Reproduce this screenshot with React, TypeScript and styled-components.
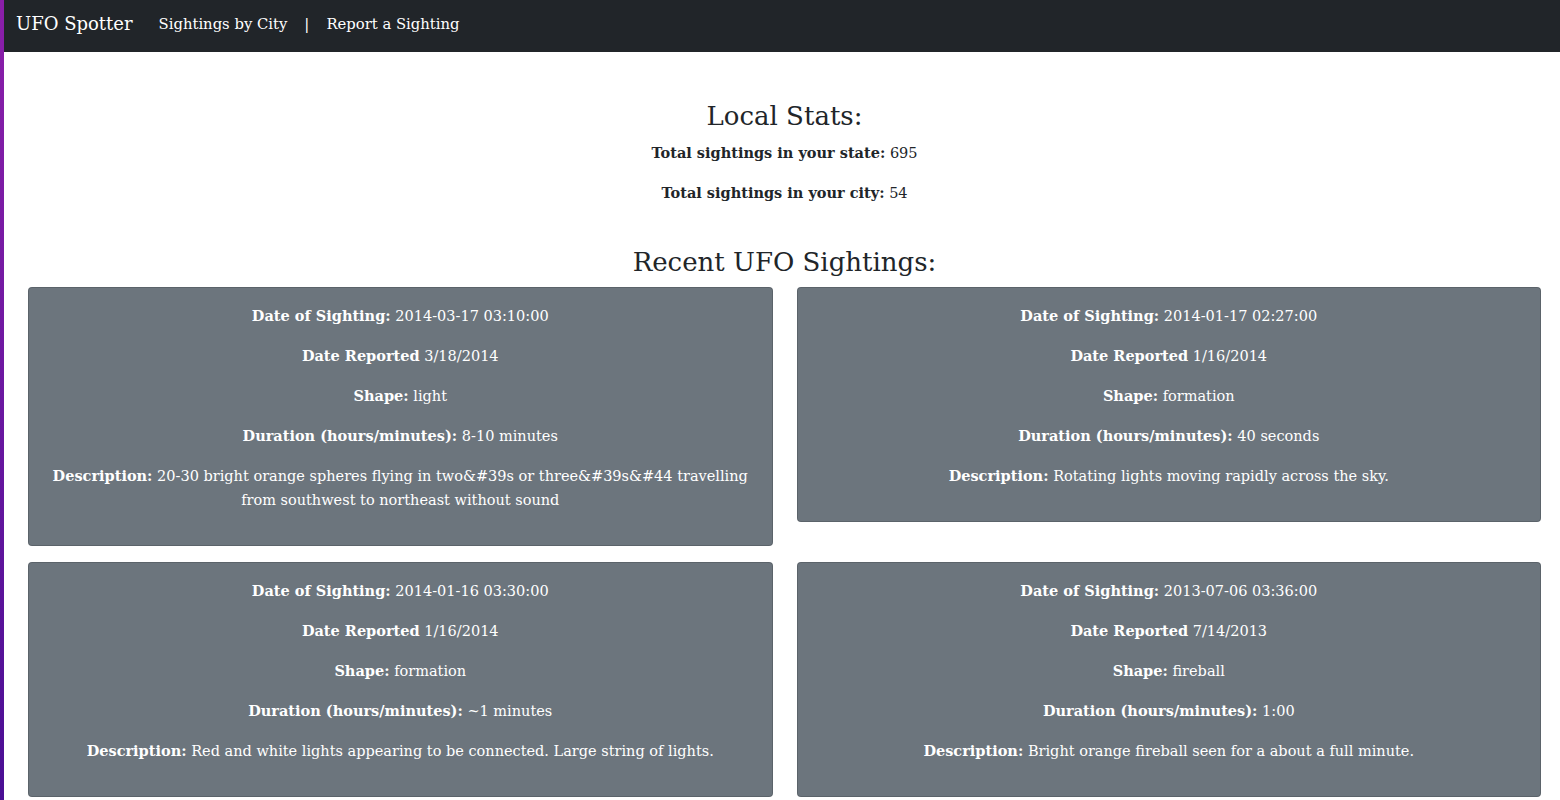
import { FC } from "react";
import styled, { createGlobalStyle } from "styled-components";

const GlobalStyle = createGlobalStyle`
  body {
    margin: 0;
    font-family: "DejaVu Serif", "Liberation Serif", serif;
    color: #212529;
    background: #ffffff;
  }
`;

const Page = styled.div`
  display: flex;
  min-height: 800px;
`;

const Strip = styled.div`
  width: 4px;
  flex-shrink: 0;
  background: linear-gradient(180deg, #8b1fa9 0%, #6a17a0 50%, #480e93 100%);
`;

const Main = styled.div`
  flex: 1;
  min-width: 0;
`;

const Navbar = styled.nav`
  display: flex;
  align-items: center;
  height: 52px;
  box-sizing: border-box;
  padding: 0 12px 5px;
  background: #212529;
  color: #ffffff;
`;

const Brand = styled.a`
  font-size: 18px;
  color: #ffffff;
  margin-right: 26px;
  white-space: nowrap;
`;

const NavLink = styled.a`
  font-size: 14.8px;
  color: #ffffff;
  white-space: nowrap;
`;

const Divider = styled.span`
  font-size: 15px;
  color: #ffffff;
  margin: 0 17px;
`;

const Content = styled.main`
  padding: 0 19px 24px 24px;
  text-align: center;
`;

const Heading = styled.h2<{ top: number }>`
  font-size: 26px;
  font-weight: normal;
  line-height: 34px;
  margin: ${({ top }) => top}px 0 8px;
`;

const Stat = styled.p`
  font-size: 14.5px;
  line-height: 24px;
  margin: 0 0 16px;
`;

const Grid = styled.div`
  display: grid;
  grid-template-columns: 1fr 1fr;
  column-gap: 24px;
  row-gap: 16px;
  align-items: start;
`;

const Card = styled.div`
  background: #6c757d;
  border: 1px solid rgba(0, 0, 0, 0.15);
  border-radius: 4px;
  color: #ffffff;
  padding: 16px 16px 1px;
`;

const Line = styled.p`
  font-size: 14.5px;
  line-height: 24px;
  margin: 0 0 16px;
  &:last-child {
    margin-bottom: 32px;
  }
`;

interface Sighting {
  date: string;
  reported: string;
  shape: string;
  duration: string;
  description: string;
}

const sightings: Sighting[] = [
  {
    date: "2014-03-17 03:10:00",
    reported: "3/18/2014",
    shape: "light",
    duration: "8-10 minutes",
    description:
      "20-30 bright orange spheres flying in two&#39s or three&#39s&#44 travelling from southwest to northeast without sound",
  },
  {
    date: "2014-01-17 02:27:00",
    reported: "1/16/2014",
    shape: "formation",
    duration: "40 seconds",
    description: "Rotating lights moving rapidly across the sky.",
  },
  {
    date: "2014-01-16 03:30:00",
    reported: "1/16/2014",
    shape: "formation",
    duration: "~1 minutes",
    description: "Red and white lights appearing to be connected. Large string of lights.",
  },
  {
    date: "2013-07-06 03:36:00",
    reported: "7/14/2013",
    shape: "fireball",
    duration: "1:00",
    description: "Bright orange fireball seen for a about a full minute.",
  },
];

const SightingCard: FC<{ s: Sighting }> = ({ s }) => (
  <Card>
    <Line>
      <b>Date of Sighting:</b> {s.date}
    </Line>
    <Line>
      <b>Date Reported</b> {s.reported}
    </Line>
    <Line>
      <b>Shape:</b> {s.shape}
    </Line>
    <Line>
      <b>Duration (hours/minutes):</b> {s.duration}
    </Line>
    <Line>
      <b>Description:</b> {s.description}
    </Line>
  </Card>
);

const App: FC = () => {
  return (
    <Page>
      <GlobalStyle />
      <Strip />
      <Main>
        <Navbar>
          <Brand>UFO Spotter</Brand>
          <NavLink>Sightings by City</NavLink>
          <Divider>|</Divider>
          <NavLink>Report a Sighting</NavLink>
        </Navbar>
        <Content>
          <Heading top={47}>Local Stats:</Heading>
          <Stat>
            <b>Total sightings in your state:</b> 695
          </Stat>
          <Stat>
            <b>Total sightings in your city:</b> 54
          </Stat>
          <Heading top={40}>Recent UFO Sightings:</Heading>
          <Grid>
            {sightings.map((s) => (
              <SightingCard key={s.date} s={s} />
            ))}
          </Grid>
        </Content>
      </Main>
    </Page>
  );
};

export default App;
